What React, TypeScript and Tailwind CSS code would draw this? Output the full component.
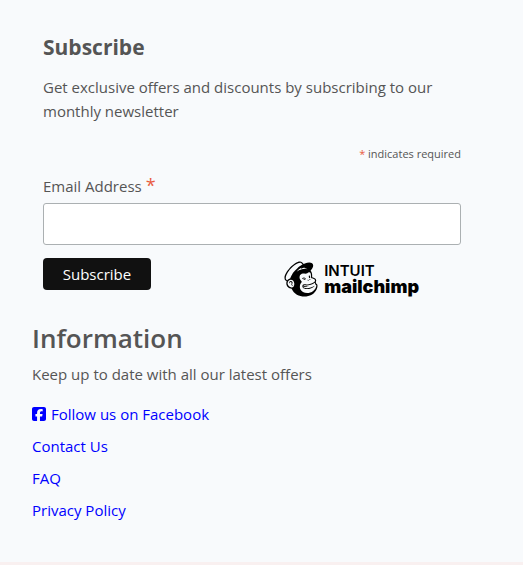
import { FaMailchimp, FaSquareFacebook } from 'react-icons/fa6';

const links = [
  { label: 'Contact Us', href: '#contact' },
  { label: 'FAQ', href: '#faq' },
  { label: 'Privacy Policy', href: '#privacy' },
];

function MailchimpLogo() {
  return (
    <a href="#mailchimp" aria-label="Intuit Mailchimp" className="mr-[42px] flex h-[42px] items-center gap-1 text-black">
      <FaMailchimp className="h-10 w-[38px]" aria-hidden="true" />
      <span className="flex flex-col font-['Inter','Liberation_Sans',sans-serif]">
        <span className="text-[15px] leading-4 font-semibold">INTUIT</span>
        <span className="text-[18px] leading-4 font-black">mailchimp</span>
      </span>
    </a>
  );
}

function SubscribeForm() {
  return (
    <form className="pr-[30px] pl-[11px]" onSubmit={(event) => event.preventDefault()}>
      <h2 className="text-[21px] leading-[30px] font-bold">Subscribe</h2>
      <p className="mt-[13px] leading-6">
        Get exclusive offers and discounts by subscribing to our monthly newsletter
      </p>
      <p className="mt-[23px] text-right text-[11px] leading-4">
        <span className="text-[#e85c41]">*</span> indicates required
      </p>
      <label htmlFor="email" className="mt-3 block leading-6">
        Email Address <span className="text-[18px] leading-4 text-[#e85c41]">*</span>
      </label>
      <input
        id="email"
        type="email"
        required
        className="mt-[5px] block h-[42px] w-full rounded-[3px] border border-[#abb0b2] bg-white px-2 outline-none"
      />
      <div className="mt-[13px] flex items-start justify-between">
        <button type="submit" className="h-8 w-[108px] rounded bg-[#111] text-white">
          Subscribe
        </button>
        <MailchimpLogo />
      </div>
    </form>
  );
}

export default function App() {
  return (
    <main className="border-b-[3px] border-[#f9f0f0] bg-[#f8fafc] px-8 pt-8 pb-10 font-['Open_Sans','Noto_Sans',sans-serif] text-[15px] text-[#555]">
      <SubscribeForm />
      <section className="mt-5">
        <h2 className="text-[26px] leading-9 font-semibold">Information</h2>
        <p className="mt-[6px] leading-6">Keep up to date with all our latest offers</p>
        <ul className="mt-4 flex flex-col gap-2 leading-6 text-[#00f]">
          <li className="flex">
            <a href="#facebook" className="flex items-center gap-[5px]">
              <FaSquareFacebook className="-mx-px size-4" aria-hidden="true" />
              Follow us on Facebook
            </a>
          </li>
          {links.map((link) => (
            <li key={link.href}>
              <a href={link.href}>{link.label}</a>
            </li>
          ))}
        </ul>
      </section>
    </main>
  );
}
